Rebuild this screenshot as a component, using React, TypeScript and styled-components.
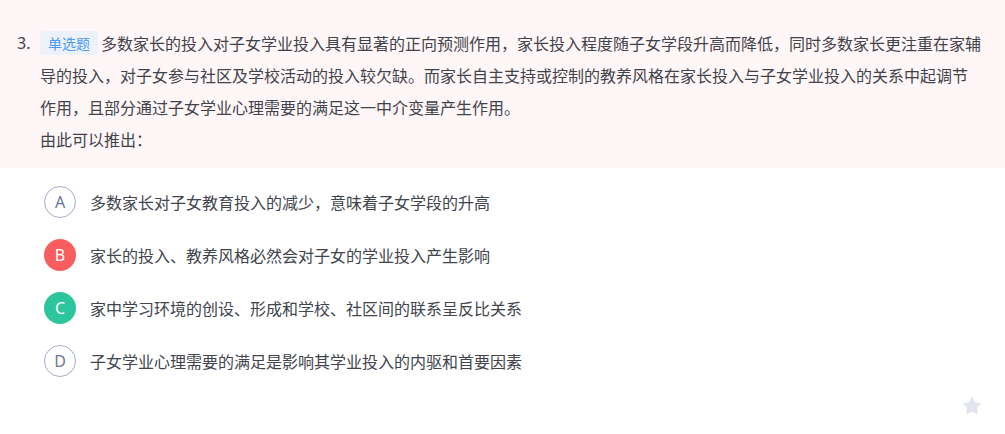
import React from 'react'
import styled, { createGlobalStyle } from 'styled-components'

const GlobalStyle = createGlobalStyle`
    html, body {
        margin: 0;
        padding: 0;
        background: #fff;
    }
    body {
        font-family: "Noto Sans", "Noto Sans CJK SC", sans-serif;
        color: #3f434b;
    }
`

const Page = styled.div`
    width: 1005px;
    height: 434px;
    display: flex;
    flex-direction: column;
    background: #fff;
`

const Stem = styled.div`
    background: #fff6f7;
    display: grid;
    grid-template-columns: 23px 1fr;
    padding: 27px 23px 13px 17px;
`

const Number = styled.div`
    font-size: 16px;
    line-height: 32px;
    color: #3f434b;
`

const StemText = styled.div`
    font-family: "Noto Sans CJK SC", sans-serif;
    font-size: 16px;
    line-height: 32px;
    color: #3f434b;
`

const Tag = styled.span`
    display: inline-block;
    height: 24px;
    line-height: 24px;
    padding: 0 8px;
    margin-right: 3px;
    border-radius: 4px;
    background: #edf2fa;
    color: #4a9af6;
    font-size: 14px;
    vertical-align: 1px;
`

const Options = styled.div`
    display: flex;
    flex-direction: column;
    gap: 21px;
    padding: 18px 0 0 44px;
`

const OptionRow = styled.div`
    display: flex;
    align-items: center;
    gap: 14px;
    height: 32px;
`

type CircleProps = { $state: 'idle' | 'wrong' | 'right' }

const Circle = styled.div<CircleProps>`
    box-sizing: border-box;
    width: 32px;
    height: 32px;
    border-radius: 50%;
    display: flex;
    align-items: center;
    justify-content: center;
    font-size: 16px;
    border: 1px solid ${({ $state }) => ($state === 'idle' ? '#a6adc9' : 'transparent')};
    background: ${({ $state }) =>
        $state === 'wrong' ? '#fa5d5d' : $state === 'right' ? '#2dc59d' : '#fff'};
    color: ${({ $state }) => ($state === 'idle' ? '#6d7696' : '#fff')};
`

const OptionText = styled.span`
    font-family: "Noto Sans CJK SC", sans-serif;
    font-size: 16px;
    color: #40444c;
`

const Footer = styled.div`
    flex: 1;
    display: flex;
    justify-content: flex-end;
    align-items: flex-end;
    padding: 0 23px 18px 0;
`

const StarButton = styled.button`
    border: none;
    background: none;
    padding: 0;
    width: 20px;
    height: 20px;
    cursor: pointer;
    display: flex;
`

const options: { key: string; text: string; state: CircleProps['$state'] }[] = [
    { key: 'A', text: '多数家长对子女教育投入的减少，意味着子女学段的升高', state: 'idle' },
    { key: 'B', text: '家长的投入、教养风格必然会对子女的学业投入产生影响', state: 'wrong' },
    { key: 'C', text: '家中学习环境的创设、形成和学校、社区间的联系呈反比关系', state: 'right' },
    { key: 'D', text: '子女学业心理需要的满足是影响其学业投入的内驱和首要因素', state: 'idle' },
]

const App = () => {
    return (
        <>
            <GlobalStyle />
            <Page>
                <Stem>
                    <Number>3.</Number>
                    <StemText>
                        <Tag>单选题</Tag>
                        多数家长的投入对子女学业投入具有显著的正向预测作用，家长投入程度随子女学段升高而降低，同时多数家长更注重在家辅导的投入，对子女参与社区及学校活动的投入较欠缺。而家长自主支持或控制的教养风格在家长投入与子女学业投入的关系中起调节作用，且部分通过子女学业心理需要的满足这一中介变量产生作用。
                        <br />
                        由此可以推出：
                    </StemText>
                </Stem>
                <Options>
                    {options.map((o) => (
                        <OptionRow key={o.key}>
                            <Circle $state={o.state}>{o.key}</Circle>
                            <OptionText>{o.text}</OptionText>
                        </OptionRow>
                    ))}
                </Options>
                <Footer>
                    <StarButton aria-label="收藏">
                        <svg width="20" height="20" viewBox="0 0 24 24">
                            <path
                                d="M12 2.5l2.9 6.1 6.6.8-4.9 4.6 1.3 6.6L12 17.3l-5.9 3.3 1.3-6.6-4.9-4.6 6.6-.8z"
                                fill="#e2e5ee"
                                stroke="#e2e5ee"
                                strokeWidth="2"
                                strokeLinejoin="round"
                            />
                        </svg>
                    </StarButton>
                </Footer>
            </Page>
        </>
    )
}

export default App
